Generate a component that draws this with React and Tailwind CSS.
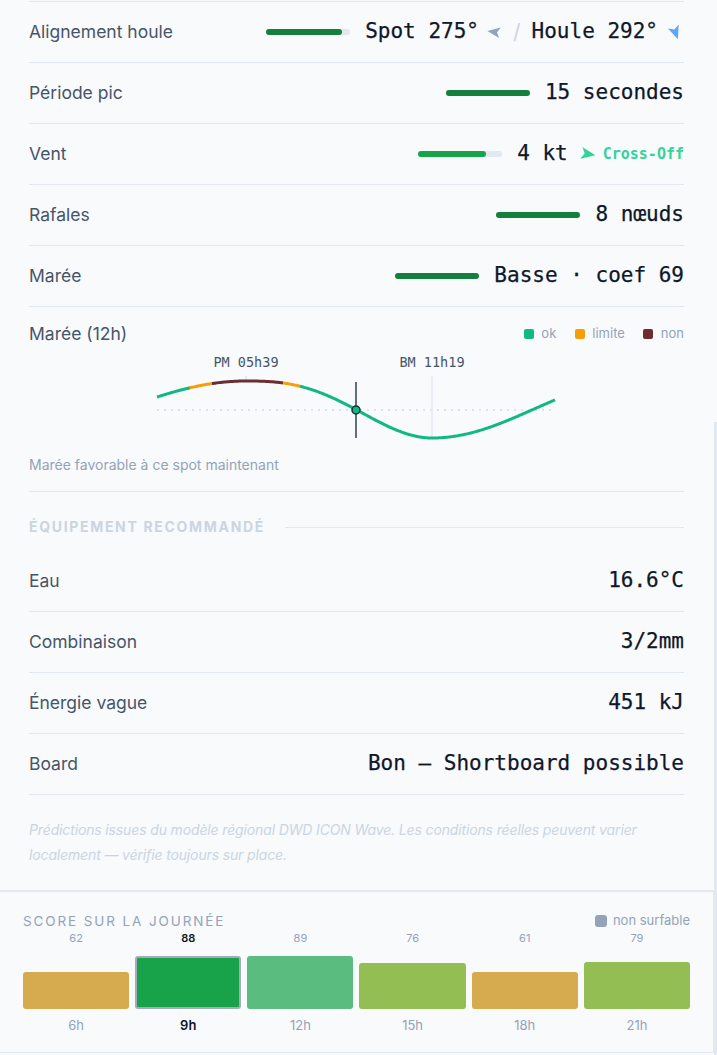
import React from 'react'

const sans = { fontFamily: 'Inter, "Noto Sans", sans-serif' }
const mono = { fontFamily: '"DejaVu Sans Mono", "Liberation Mono", monospace' }

// filled navigation arrow, rotated by the caller
function Arrow({ className }) {
	return (
		<svg viewBox="0 0 24 24" className={className} fill="currentColor">
			<polygon points="12 2 20 21 12 16.5 4 21 12 2" />
		</svg>
	)
}

function Bar({ pct, color }) {
	return (
		<div className="h-[6px] w-[84px] rounded-full bg-[#e2e8f0]">
			<div className={`h-full rounded-full ${color}`} style={{ width: pct + '%' }} />
		</div>
	)
}

function Row({ label, children, border = 'border-t' }) {
	return (
		<div className={`flex h-[61px] items-center justify-between ${border} border-[#e2e8f0]`}>
			<span className="text-[17.5px] text-[#475569]">{label}</span>
			<div className="flex items-center">{children}</div>
		</div>
	)
}

function Value({ children }) {
	return (
		<span className="text-[21px] font-medium text-[#0f172a] [-webkit-text-stroke:0.25px_#0f172a]" style={mono}>
			{children}
		</span>
	)
}

// tide height in page coordinates: rise, fall, rise again
function tideY(x) {
	const mid = 409.5
	const amp = 28.5
	if (x <= 246) return mid - amp * Math.cos((Math.PI * (x - 246)) / 250)
	if (x <= 432) {
		const t = (x - 246) / 186
		return mid - amp * Math.cos(Math.PI * Math.pow(t, 1.315))
	}
	return mid + amp * Math.cos((Math.PI * (x - 432)) / 202)
}

function tidePath(x0, x1, ox, oy) {
	let d = ''
	for (let x = x0; x <= x1; x += 1) {
		d += (x === x0 ? 'M' : 'L') + (x - ox) + ' ' + (tideY(x) - oy).toFixed(2) + ' '
	}
	return d
}

const tideSegments = [
	[157, 190, '#10b981'],
	[190, 212, '#f59e0b'],
	[212, 283, '#6b2d2d'],
	[283, 300, '#f59e0b'],
	[300, 555, '#10b981'],
]

function TideChart() {
	const ox = 29
	const oy = 344
	return (
		<svg width="655" height="100" className="block">
			<line x1={157 - ox} x2={555 - ox} y1={410 - oy} y2={410 - oy} stroke="#d5dce5" strokeWidth="1.5" strokeDasharray="2 5" />
			<line x1={246 - ox} x2={246 - ox} y1={376 - oy} y2={382 - oy} stroke="#cbd5e1" strokeWidth="1" />
			<line x1={432 - ox} x2={432 - ox} y1={376 - oy} y2={438 - oy} stroke="#e2e8f0" strokeWidth="1.5" />
			{tideSegments.map(([a, b, c]) => (
				<path key={a} d={tidePath(a, b, ox, oy)} fill="none" stroke={c} strokeWidth="3" />
			))}
			<line x1={356 - ox} x2={356 - ox} y1={382 - oy} y2={438 - oy} stroke="#334155" strokeWidth="1.5" />
			<circle cx={356 - ox} cy={410 - oy} r="4" fill="#10b981" stroke="#1e293b" strokeWidth="1.5" />
			<text x={246 - ox} y={363 - oy} textAnchor="middle" dominantBaseline="middle" fontSize="13.5" fill="#475569" style={mono}>
				PM 05h39
			</text>
			<text x={432 - ox} y={363 - oy} textAnchor="middle" dominantBaseline="middle" fontSize="13.5" fill="#475569" style={mono}>
				BM 11h19
			</text>
		</svg>
	)
}

const slots = [
	{ h: '6h', score: 62, color: 'bg-[#d6aa4e]' },
	{ h: '9h', score: 88, color: 'bg-[#18a34a]', active: true },
	{ h: '12h', score: 89, color: 'bg-[#5bbc80]' },
	{ h: '15h', score: 76, color: 'bg-[#93be53]' },
	{ h: '18h', score: 61, color: 'bg-[#d6aa4e]' },
	{ h: '21h', score: 79, color: 'bg-[#93be53]' },
]

function DayScore() {
	return (
		<div className="w-[714px] border-t-2 border-r border-b border-[#e2e8f0] bg-[#f8fafc] px-[23px] pt-[21px] pb-[19px]">
			<div className="flex h-4 items-center justify-between">
				<span className="text-[13.5px] tracking-[0.14em] text-[#94a3b8]">SCORE SUR LA JOURNÉE</span>
				<span className="flex items-center gap-[6px] text-[13px] text-[#94a3b8]">
					<span className="h-[12px] w-[12px] rounded-[3px] bg-[#94a3b8]" />
					non surfable
				</span>
			</div>
			<div className="mt-[2px] grid grid-cols-6 gap-[6px]">
				{slots.map((s) => (
					<div key={s.h} className="flex flex-col items-center">
						<span className={`h-[14px] text-[11px] leading-[14px] ${s.active ? 'font-semibold text-[#0f172a]' : 'text-[#94a3b8]'}`}>
							{s.score}
						</span>
						<div className="flex h-[64px] w-full items-end">
							<div
								className={`w-full rounded-[3px] ${s.color} ${s.active ? 'border-2 border-[#a3acb9]' : ''}`}
								style={{ height: Math.round(s.score * 0.6) + 'px' }}
							/>
						</div>
						<span className={`mt-2 text-[13px] leading-4 ${s.active ? 'font-semibold text-[#0f172a]' : 'text-[#94a3b8]'}`}>
							{s.h}
						</span>
					</div>
				))}
			</div>
		</div>
	)
}

export default function App() {
	return (
		<div className="relative min-h-screen bg-[#f8fafc]" style={sans}>
			<div className="px-[29px] pt-px pr-[33px]">
				<Row label="Alignement houle">
					<Bar pct={90} color="bg-[#15803d]" />
					<span className="ml-[15px] flex items-center">
						<Value>Spot 275°</Value>
						<Arrow className="ml-[7px] h-[16px] w-[16px] -rotate-[82deg] text-[#94a3b8]" />
						<span className="mx-[11px] text-[21px] text-[#cbd5e1]">/</span>
						<Value>Houle 292°</Value>
						<Arrow className="ml-[9px] h-[17px] w-[17px] rotate-[160deg] text-[#60a5fa]" />
					</span>
				</Row>
				<Row label="Période pic">
					<Bar pct={100} color="bg-[#15803d]" />
					<span className="ml-[15px]">
						<Value>15 secondes</Value>
					</span>
				</Row>
				<Row label="Vent">
					<Bar pct={81} color="bg-[#16a34a]" />
					<span className="ml-[15px]">
						<Value>4 kt</Value>
					</span>
					<Arrow className="ml-[11px] h-[18px] w-[18px] rotate-[100deg] text-[#34d399]" />
					<span className="ml-[6px] text-[15px] font-bold text-[#34d399]" style={mono}>
						Cross-Off
					</span>
				</Row>
				<Row label="Rafales">
					<Bar pct={100} color="bg-[#15803d]" />
					<span className="ml-[15px]">
						<Value>8 nœuds</Value>
					</span>
				</Row>
				<Row label="Marée">
					<Bar pct={100} color="bg-[#15803d]" />
					<span className="ml-[15px]">
						<Value>Basse · coef 69</Value>
					</span>
				</Row>

				{/* tide curve over the next 12 hours */}
				<div className="border-t border-b border-[#e2e8f0] pt-[17px] pb-[16px]">
					<div className="flex h-5 items-center justify-between">
						<span className="text-[17.5px] text-[#475569]">Marée (12h)</span>
						<div className="flex items-center text-[13px] text-[#94a3b8]">
							<span className="h-[10px] w-[10px] rounded-[2px] bg-[#10b981]" />
							<span className="ml-[7px]">ok</span>
							<span className="ml-[19px] h-[10px] w-[10px] rounded-[2px] bg-[#f59e0b]" />
							<span className="ml-[7px]">limite</span>
							<span className="ml-[18px] h-[10px] w-[10px] rounded-[2px] bg-[#6b2d2d]" />
							<span className="ml-[8px]">non</span>
						</div>
					</div>
					<TideChart />
					<p className="mt-[11px] text-[14px] leading-5 text-[#94a3b8]">Marée favorable à ce spot maintenant</p>
				</div>

				<div className="flex items-center gap-5 pt-[25px]">
					<span className="text-[14px] font-bold leading-5 tracking-[0.12em] text-[#cbd5e1]">ÉQUIPEMENT RECOMMANDÉ</span>
					<span className="h-px flex-1 bg-[#e2e8f0]" />
				</div>
				<div className="mt-[14px]">
					<Row label="Eau" border="border-b">
						<Value>16.6°C</Value>
					</Row>
					<Row label="Combinaison" border="border-b">
						<Value>3/2mm</Value>
					</Row>
					<Row label="Énergie vague" border="border-b">
						<Value>451 kJ</Value>
					</Row>
					<Row label="Board" border="border-b">
						<Value>Bon — Shortboard possible</Value>
					</Row>
				</div>
				<p className="pt-[22px] pb-[23px] text-[14px] italic leading-[25px] tracking-[-0.01em] text-[#cbd5e1]">
					Prédictions issues du modèle régional DWD ICON Wave. Les conditions réelles peuvent varier localement — vérifie
					toujours sur place.
				</p>
			</div>
			<DayScore />
			{/* scroll thumb */}
			<div className="absolute top-[422px] right-0 bottom-0 w-[3px] bg-[#e2e8f0]" />
		</div>
	)
}
